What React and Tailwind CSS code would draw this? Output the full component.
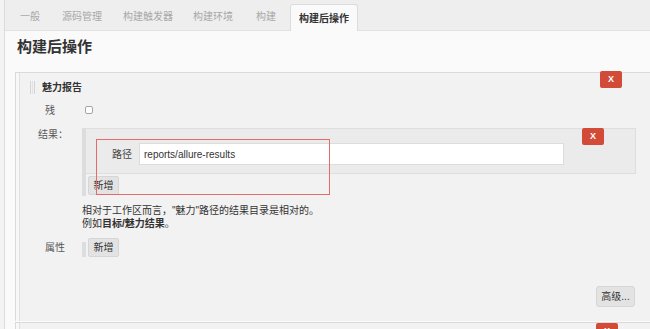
const font = {
  fontFamily: "'Liberation Sans', 'Noto Sans CJK SC', sans-serif",
};

function XButton({ className = "" }) {
  return (
    <div
      className={`w-[22px] h-[17px] rounded-[2px] bg-[#d24a38] text-white text-[9px] font-bold flex items-center justify-center ${className}`}
    >
      X
    </div>
  );
}

function AddButton({ label = "新增", className = "" }) {
  return (
    <div
      className={`h-[19px] rounded-[2px] bg-[#e3e3e3] border border-[#d6d6d6] text-[10px] text-[#333] whitespace-nowrap flex items-center justify-center ${className}`}
    >
      {label}
    </div>
  );
}

function Grip() {
  return (
    <div className="flex gap-[1px] h-[13px] ml-[10px]">
      <span className="w-[1px] h-full bg-[#d4d4d4]" />
      <span className="w-[1px] h-full bg-[#e2e2e2]" />
      <span className="w-[1px] h-full bg-[#d4d4d4]" />
    </div>
  );
}

export default function App() {
  const tabs = [
    { name: "一般", ml: "ml-[15px]" },
    { name: "源码管理", ml: "ml-[22px]" },
    { name: "构建触发器", ml: "ml-[21px]" },
    { name: "构建环境", ml: "ml-[20px]" },
    { name: "构建", ml: "ml-[23px]" },
  ];

  return (
    <div
      className="w-[650px] h-[329px] overflow-hidden bg-[#f3f3f3] pl-[4px] relative"
      style={font}
    >
      <div className="h-full border-l border-[#dcdcdc] bg-[#fafafa] flex flex-col">
        {/* TABS */}
        <div className="h-[31px] shrink-0 bg-[#eeeeee] border-b border-[#e2e2e2] flex items-end">
          {tabs.map((t) => (
            <div
              key={t.name}
              className={`${t.ml} h-[27px] flex items-center text-[10px] text-[#a8a8a8]`}
            >
              {t.name}
            </div>
          ))}
          <div className="ml-[14px] h-[27px] px-[8px] -mb-[1px] rounded-t-[3px] border border-b-0 border-[#dcdcdc] bg-[#fafafa] flex items-center text-[10px] font-bold text-[#333]">
            构建后操作
          </div>
        </div>

        {/* HEADING */}
        <h1 className="ml-[12px] mt-[6px] h-[20px] leading-[20px] text-[15px] font-bold text-[#333]">
          构建后操作
        </h1>

        {/* PANEL */}
        <div className="ml-[10px] mt-[15px] border-l border-t border-[#dadada] bg-[#f8f8f8] pl-[3px] relative shrink-0">
          <XButton className="absolute right-[28px] top-[-2px]" />
          <div className="border-l border-[#e0e0e0] bg-[#f2f2f2] pb-[14px]">
            <div className="h-[29px] flex items-center">
              <Grip />
              <span className="ml-[7px] text-[10px] font-bold text-[#333]">
                魅力报告
              </span>
            </div>

            <div className="h-[16px] flex items-center">
              <span className="w-[62px] pl-[25px] text-[10px] text-[#555]">残</span>
              <span className="ml-[3px] w-[8px] h-[8px] rounded-[2px] border border-[#a5a5a5] bg-white" />
            </div>

            <div className="mt-[10px] flex">
              <span className="w-[62px] pl-[18px] text-[10px] leading-[14px] text-[#555]">
                结果：
              </span>
              <div className="w-[554px] border-l-[4px] border-[#dddddd] pb-[1px]">
                <div className="relative h-[46px] border border-l-0 border-[#dedede] bg-[#ebebeb] flex items-start pt-[14px]">
                  <span className="ml-[26px] h-[22px] flex items-center text-[10px] text-[#444]">
                    路径
                  </span>
                  <div className="ml-[7px] w-[425px] h-[22px] bg-white border border-[#dcdcdc] flex items-center pl-[4px] text-[10px] text-[#333]">
                    reports/allure-results
                  </div>
                  <XButton className="absolute right-[31px] top-[-1px] h-[16px]" />
                </div>
                <AddButton className="ml-[2px] mt-[2px] w-[31px]" />
              </div>
            </div>

            <div className="ml-[62px] mt-[8px] text-[10px] leading-[13px] text-[#333]">
              <p>相对于工作区而言，"魅力"路径的结果目录是相对的。</p>
              <p>
                例如<b>目标/魅力结果</b>。
              </p>
            </div>

            <div className="mt-[8px] flex items-center">
              <span className="w-[62px] pl-[25px] text-[10px] text-[#555]">属性</span>
              <span className="w-[4px] h-[15px] mt-[4px] bg-[#dddddd]" />
              <AddButton className="ml-[2px] w-[31px]" />
            </div>

            <div className="mt-[29px] flex justify-end pr-[15px]">
              <div className="w-[39px] h-[21px] rounded-[3px] bg-[#e3e3e3] border border-[#d6d6d6] text-[10px] text-[#333] whitespace-nowrap flex items-center justify-center">
                高级...
              </div>
            </div>
          </div>
        </div>

        {/* NEXT PANEL */}
        <div className="ml-[10px] mt-[1px] border-l border-t border-[#dadada] bg-[#f8f8f8] pl-[3px] relative h-[20px]">
          <XButton className="absolute right-[32px] top-[0px] w-[18px]" />
          <div className="h-full border-l border-[#e0e0e0] bg-[#f2f2f2]" />
        </div>
      </div>

      {/* annotation */}
      <div className="absolute left-[96px] top-[139px] w-[234px] h-[56px] border border-[#e36b6b]" />
    </div>
  );
}
